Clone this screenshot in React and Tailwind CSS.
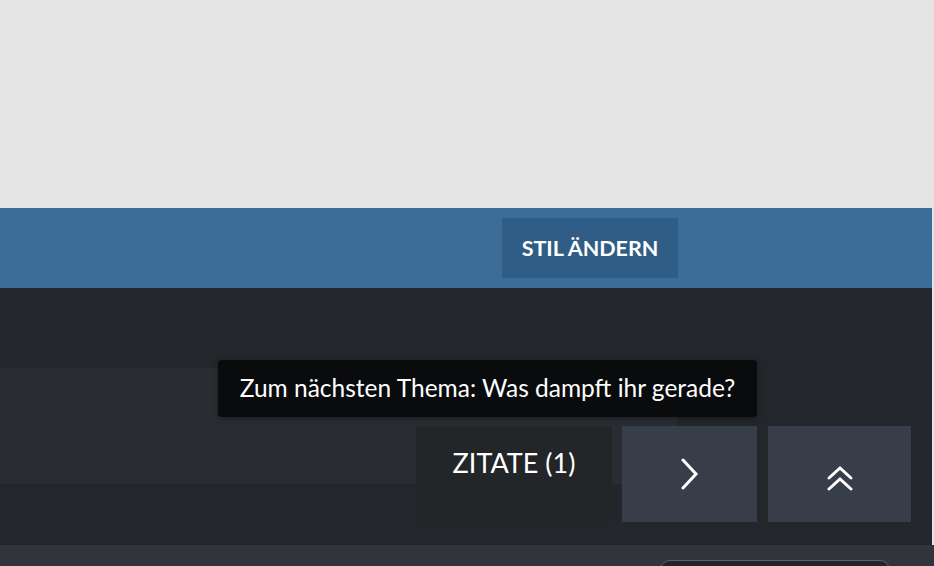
export default function App() {
  const font = { fontFamily: '"Source Sans Pro", Lato, "Noto Sans", sans-serif' };
  return (
    <div className="w-[934px] h-[566px] overflow-hidden bg-[#e4e4e4]" style={font}>
      <div className="h-[208px] bg-[#e4e4e4]" />
      <div className="w-[932px] h-[80px] bg-[#3c6d98] flex items-start pt-[10px] pl-[502px]">
        <div className="w-[176px] h-[60px] bg-[#305d86] flex items-center justify-center text-white font-bold text-[21.5px]">
          STIL ÄNDERN
        </div>
      </div>
      <div className="relative w-[932px] h-[257px] bg-[#23272b] pt-[80px]">
        <div className="w-[677px] h-[116px] bg-[#292d32]" />
        <div className="relative mt-[-58px] flex items-start pl-[416px]">
          <div className="w-[196px] h-[96px] bg-[#222629] flex justify-center pt-[19px] text-white text-[27px] leading-[36px]">
            ZITATE (1)
          </div>
          <div className="ml-[10px] w-[135px] h-[96px] bg-[#383e49] flex items-center justify-center">
            <svg width="20" height="32" viewBox="0 0 20 32" fill="none" stroke="white" strokeWidth="3" strokeLinecap="round" strokeLinejoin="miter">
              <path d="M3 2 L16 16 L3 30" />
            </svg>
          </div>
          <div className="ml-[11px] w-[143px] h-[96px] bg-[#383e49] flex items-center justify-center pt-[8px]">
            <svg width="28" height="26" viewBox="0 0 28 26" fill="none" stroke="white" strokeWidth="3" strokeLinecap="round">
              <path d="M3 13 L14 3 L25 13" />
              <path d="M3 24 L14 14 L25 24" />
            </svg>
          </div>
        </div>
        <div className="absolute left-[218px] top-[72px] w-[539px] h-[57px] rounded-[4px] bg-[#0a0b0d] shadow-[0_2px_6px_rgba(0,0,0,0.35)] flex items-center justify-center text-white text-[24.5px]">
          Zum nächsten Thema: Was dampft ihr gerade?
        </div>
      </div>
      <div className="relative h-[21px] bg-[#313539]">
        <div className="absolute left-[660px] top-[15px] w-[230px] h-[20px] rounded-t-[10px] border border-[#5c6168] bg-[#212529]" />
      </div>
    </div>
  );
}
